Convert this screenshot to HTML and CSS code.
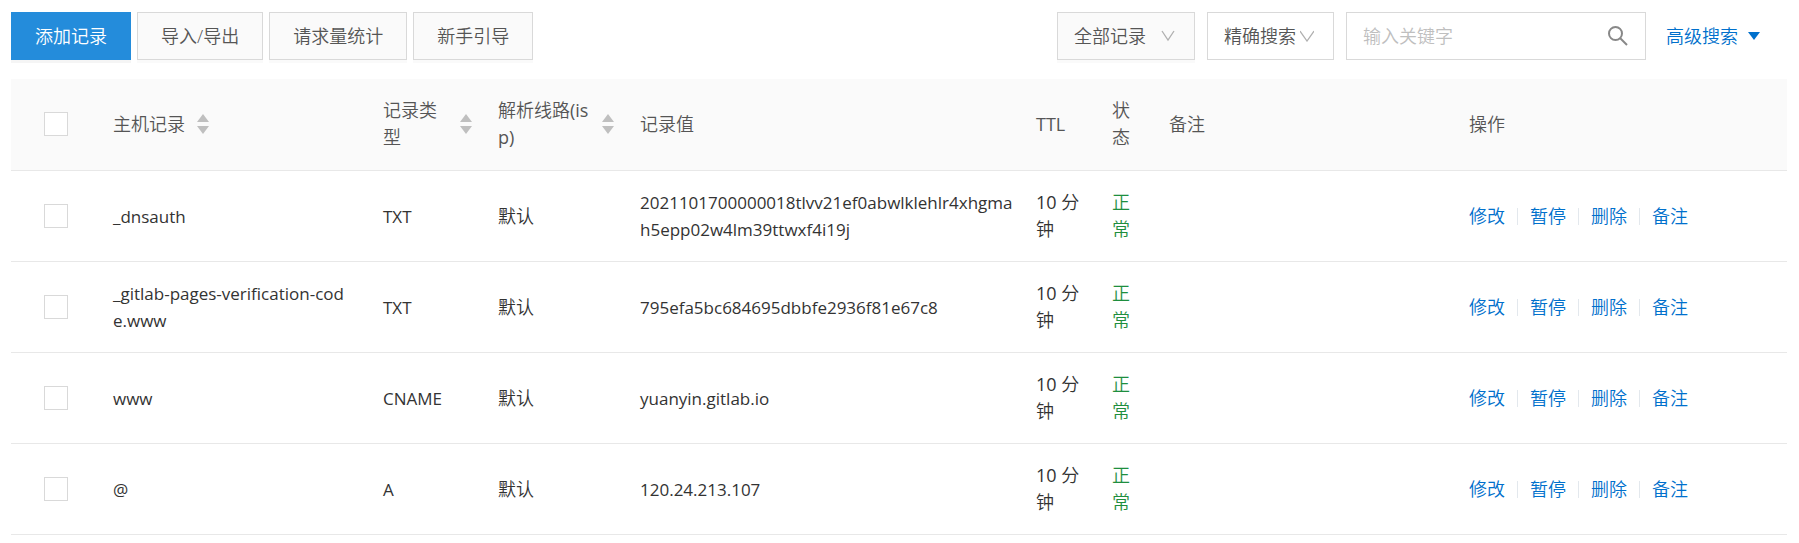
FILE: index.html
```html
<!DOCTYPE html>
<html lang="zh-CN">
<head>
<meta charset="utf-8">
<title>解析记录</title>
<link rel="stylesheet" href="styles.css">
</head>
<body>
<main class="page">
  <div class="toolbar">
    <div class="actions">
      <button class="btn btn-primary" type="button">添加记录</button>
      <button class="btn" type="button">导入/导出</button>
      <button class="btn" type="button">请求量统计</button>
      <button class="btn" type="button">新手引导</button>
    </div>
    <form class="filters">
      <div class="select select-muted">
        <select aria-label="记录范围"><option>全部记录</option></select>
        <svg class="chevron chevron-small" viewBox="0 0 14 12" aria-hidden="true"><path d="M1 1l6 9 6-9"/></svg>
      </div>
      <div class="select">
        <select aria-label="搜索方式"><option>精确搜索</option></select>
        <svg class="chevron" viewBox="0 0 14 12" aria-hidden="true"><path d="M0 1l7 10 7-10"/></svg>
      </div>
      <div class="search">
        <input type="text" placeholder="输入关键字" aria-label="输入关键字">
        <button class="search-btn" type="button" aria-label="搜索">
          <svg viewBox="0 0 20 20" aria-hidden="true"><circle cx="7.5" cy="7.5" r="6.5"/><path d="M12 12l7 7"/></svg>
        </button>
      </div>
      <a class="advanced" href="#">高级搜索<svg viewBox="0 0 12 8" aria-hidden="true"><path d="M0 0h12L6 8z"/></svg></a>
    </form>
  </div>

  <table class="records">
    <colgroup>
      <col class="c-check"><col class="c-host"><col class="c-type"><col class="c-line"><col class="c-value"><col class="c-ttl"><col class="c-status"><col class="c-note"><col>
    </colgroup>
    <thead>
      <tr>
        <th class="check"><input type="checkbox" aria-label="全选"></th>
        <th><div class="sortable"><span>主机记录</span><svg class="sorter" viewBox="0 0 12 20" aria-hidden="true"><path d="M6 0l6 8H0zM0 12h12l-6 8z"/></svg></div></th>
        <th><div class="sortable fill"><span>记录类型</span><svg class="sorter" viewBox="0 0 12 20" aria-hidden="true"><path d="M6 0l6 8H0zM0 12h12l-6 8z"/></svg></div></th>
        <th><div class="sortable fill"><span>解析线路(isp)</span><svg class="sorter" viewBox="0 0 12 20" aria-hidden="true"><path d="M6 0l6 8H0zM0 12h12l-6 8z"/></svg></div></th>
        <th>记录值</th>
        <th>TTL</th>
        <th>状态</th>
        <th>备注</th>
        <th>操作</th>
      </tr>
    </thead>
    <tbody>
      <tr>
        <td class="check"><input type="checkbox" aria-label="选择 _dnsauth"></td>
        <td class="host">_dnsauth</td><td>TXT</td><td class="zh">默认</td>
        <td class="value">2021101700000018tlvv21ef0abwlklehlr4xhgmah5epp02w4lm39ttwxf4i19j</td>
        <td class="zh">10 分钟</td><td class="zh ok">正常</td><td></td>
        <td><div class="ops"><a href="#">修改</a><a href="#">暂停</a><a href="#">删除</a><a href="#">备注</a></div></td>
      </tr>
      <tr>
        <td class="check"><input type="checkbox" aria-label="选择 _gitlab-pages-verification-code.www"></td>
        <td class="host">_gitlab-pages-verification-code.www</td><td>TXT</td><td class="zh">默认</td>
        <td class="value">795efa5bc684695dbbfe2936f81e67c8</td>
        <td class="zh">10 分钟</td><td class="zh ok">正常</td><td></td>
        <td><div class="ops"><a href="#">修改</a><a href="#">暂停</a><a href="#">删除</a><a href="#">备注</a></div></td>
      </tr>
      <tr>
        <td class="check"><input type="checkbox" aria-label="选择 www"></td>
        <td class="host">www</td><td>CNAME</td><td class="zh">默认</td>
        <td class="value">yuanyin.gitlab.io</td>
        <td class="zh">10 分钟</td><td class="zh ok">正常</td><td></td>
        <td><div class="ops"><a href="#">修改</a><a href="#">暂停</a><a href="#">删除</a><a href="#">备注</a></div></td>
      </tr>
      <tr>
        <td class="check"><input type="checkbox" aria-label="选择 @"></td>
        <td class="host">@</td><td>A</td><td class="zh">默认</td>
        <td class="value">120.24.213.107</td>
        <td class="zh">10 分钟</td><td class="zh ok">正常</td><td></td>
        <td><div class="ops"><a href="#">修改</a><a href="#">暂停</a><a href="#">删除</a><a href="#">备注</a></div></td>
      </tr>
    </tbody>
  </table>
</main>
</body>
</html>
```
FILE: styles.css
```css
* {
  box-sizing: border-box;
}

body {
  margin: 0;
  background: #fff;
  color: #333;
  font: 18px/27px "Open Sans", "Noto Sans CJK SC DemiLight", "Noto Sans CJK SC", sans-serif;
}

a {
  color: #0070cc;
  text-decoration: none;
}

button,
input,
select {
  margin: 0;
  font: inherit;
  color: #555;
}

.page {
  padding: 12px 12px 0 11px;
}

/* Toolbar */
.toolbar {
  display: flex;
  justify-content: space-between;
  margin-bottom: 19px;
  font-weight: 350;
}

.actions {
  display: flex;
  gap: 6px;
}

.btn {
  height: 48px;
  padding: 0 23px;
  border: 1px solid #d9d9d9;
  background: #fafafa;
  box-shadow: 0 3px 0 #fafafa;
}

.btn-primary {
  border-color: #248cdb;
  background: #248cdb;
  box-shadow: 0 3px 0 #f5f5f5;
  color: #fff;
}

.filters {
  display: flex;
  align-items: center;
  gap: 12px;
  padding-right: 27px;
}

.select {
  display: grid;
  align-items: center;
  width: 127px;
}

.select-muted {
  width: 138px;
}

.select select,
.select .chevron {
  grid-area: 1 / 1;
}

.select select {
  appearance: none;
  width: 100%;
  height: 48px;
  padding: 0 16px;
  border: 1px solid #d9d9d9;
  border-radius: 0;
  background: #fff;
}

.select-muted select {
  background: #fafafa;
  box-shadow: 0 3px 0 #fafafa;
}

.chevron {
  justify-self: end;
  width: 14px;
  height: 12px;
  margin-right: 20px;
  fill: none;
  stroke: #b0b0b0;
  stroke-width: 1.3;
  pointer-events: none;
}

.chevron-small {
  width: 14px;
  height: 12px;
}

.search {
  display: flex;
  align-items: center;
  width: 300px;
  height: 48px;
  border: 1px solid #d9d9d9;
}

.search input {
  flex: 1;
  min-width: 0;
  height: 100%;
  padding: 0 16px;
  border: 0;
  outline: 0;
  background: none;
}

.search input::placeholder {
  color: #bfbfbf;
}

.search-btn {
  display: flex;
  padding: 0 17px;
  border: 0;
  background: none;
}

.search-btn svg {
  width: 20px;
  height: 20px;
  fill: none;
  stroke: #888;
  stroke-width: 2;
}

.advanced {
  display: flex;
  align-items: center;
  gap: 10px;
  margin-left: 8px;
  white-space: nowrap;
}

.advanced svg {
  width: 12px;
  height: 8px;
  fill: #0070cc;
}

/* Records table */
.records {
  width: 100%;
  border-collapse: separate;
  border-spacing: 0;
  table-layout: fixed;
}

.c-check { width: 90px; }
.c-host { width: 270px; }
.c-type { width: 115px; }
.c-line { width: 142px; }
.c-value { width: 396px; }
.c-ttl { width: 76px; }
.c-status { width: 57px; }
.c-note { width: 300px; }

.records th,
.records td {
  padding: 18px 12px;
  border-bottom: 1px solid #e8e8e8;
  text-align: left;
  vertical-align: middle;
  word-break: break-all;
}

.records th {
  padding-bottom: 19px;
  background: #fafafa;
  color: #555;
  font-size: 18px;
  font-weight: 400;
}

.records td {
  font-size: 17px;
}

.records .host {
  padding-right: 20px;
}

.records .value {
  padding-right: 6px;
}

.records .zh {
  font-size: 18px;
}

.records .ok {
  color: #1e8e3e;
}

.records .check {
  padding-left: 33px;
}

.check input {
  appearance: none;
  display: block;
  width: 24px;
  height: 24px;
  border: 1px solid #d9d9d9;
  background: #fff;
}

.sortable {
  display: flex;
  align-items: center;
  gap: 12px;
}

.fill {
  padding-right: 2px;
}

.fill span {
  flex: 1;
}

.sorter {
  flex: none;
  width: 12px;
  height: 20px;
  fill: #bfbfbf;
}

.ops {
  display: flex;
  align-items: center;
  font-size: 18px;
}

.ops a + a {
  display: flex;
  align-items: center;
}

.ops a + a::before {
  content: "";
  width: 1px;
  height: 17px;
  margin: 0 12px;
  background: #e3e8ed;
}
```
